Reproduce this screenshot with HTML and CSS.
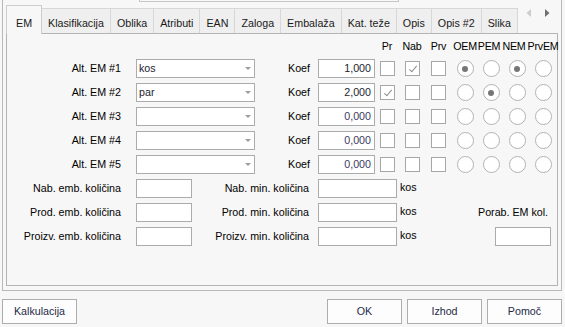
FILE: index.html
```html
<!DOCTYPE html>
<html lang="sl">
<head>
    <meta charset="UTF-8">
    <meta name="viewport" content="width=device-width, initial-scale=1.0">
    <title>Artikel - EM</title>
    <link rel="stylesheet" href="styles.css">
</head>
<body>
    <!-- Tab control frame -->
    <div class="frame">
        <div class="topbox"></div>

        <div class="tabs">
            <div class="tab active">EM</div>
            <div class="tab">Klasifikacija</div>
            <div class="tab">Oblika</div>
            <div class="tab">Atributi</div>
            <div class="tab">EAN</div>
            <div class="tab">Zaloga</div>
            <div class="tab">Embalaža</div>
            <div class="tab">Kat. teže</div>
            <div class="tab">Opis</div>
            <div class="tab">Opis #2</div>
            <div class="tab">Slika</div>
            <div class="tab-arrows">
                <svg width="5" height="8" viewBox="0 0 5 8"><path d="M5 0 L0.5 4 L5 8 Z" fill="#cdcdcd"/></svg>
                <svg width="5" height="8" viewBox="0 0 5 8"><path d="M0 0 L4.5 4 L0 8 Z" fill="#707070"/></svg>
            </div>
        </div>

        <div class="panel">
            <!-- Alternative units -->
            <div class="em-grid">
                <span class="head-gap"></span>
                <span class="col-head">Pr</span>
                <span class="col-head">Nab</span>
                <span class="col-head">Prv</span>
                <span class="col-head">OEM</span>
                <span class="col-head pem">PEM</span>
                <span class="col-head nem">NEM</span>
                <span class="col-head">PrvEM</span>

                <label class="lbl">Alt. EM #1</label>
                <div class="combo"><span>kos</span><i class="combo-arrow"></i></div>
                <label class="lbl koef">Koef</label>
                <div class="num">1,000</div>
                <span class="cell"><span class="chk"></span></span>
                <span class="cell"><span class="chk checked"></span></span>
                <span class="cell"><span class="chk"></span></span>
                <span class="cell"><span class="radio on"></span></span>
                <span class="cell"><span class="radio"></span></span>
                <span class="cell"><span class="radio on"></span></span>
                <span class="cell"><span class="radio"></span></span>

                <label class="lbl">Alt. EM #2</label>
                <div class="combo"><span>par</span><i class="combo-arrow"></i></div>
                <label class="lbl koef">Koef</label>
                <div class="num">2,000</div>
                <span class="cell"><span class="chk checked"></span></span>
                <span class="cell"><span class="chk"></span></span>
                <span class="cell"><span class="chk"></span></span>
                <span class="cell"><span class="radio"></span></span>
                <span class="cell"><span class="radio on"></span></span>
                <span class="cell"><span class="radio"></span></span>
                <span class="cell"><span class="radio"></span></span>

                <label class="lbl">Alt. EM #3</label>
                <div class="combo"><span></span><i class="combo-arrow"></i></div>
                <label class="lbl koef">Koef</label>
                <div class="num dim">0,000</div>
                <span class="cell"><span class="chk"></span></span>
                <span class="cell"><span class="chk"></span></span>
                <span class="cell"><span class="chk"></span></span>
                <span class="cell"><span class="radio"></span></span>
                <span class="cell"><span class="radio"></span></span>
                <span class="cell"><span class="radio"></span></span>
                <span class="cell"><span class="radio"></span></span>

                <label class="lbl">Alt. EM #4</label>
                <div class="combo"><span></span><i class="combo-arrow"></i></div>
                <label class="lbl koef">Koef</label>
                <div class="num dim">0,000</div>
                <span class="cell"><span class="chk"></span></span>
                <span class="cell"><span class="chk"></span></span>
                <span class="cell"><span class="chk"></span></span>
                <span class="cell"><span class="radio"></span></span>
                <span class="cell"><span class="radio"></span></span>
                <span class="cell"><span class="radio"></span></span>
                <span class="cell"><span class="radio"></span></span>

                <label class="lbl">Alt. EM #5</label>
                <div class="combo"><span></span><i class="combo-arrow"></i></div>
                <label class="lbl koef">Koef</label>
                <div class="num dim">0,000</div>
                <span class="cell"><span class="chk"></span></span>
                <span class="cell"><span class="chk"></span></span>
                <span class="cell"><span class="chk"></span></span>
                <span class="cell"><span class="radio"></span></span>
                <span class="cell"><span class="radio"></span></span>
                <span class="cell"><span class="radio"></span></span>
                <span class="cell"><span class="radio"></span></span>
            </div>

            <!-- Package quantities -->
            <div class="qty-grid">
                <label class="lbl">Nab. emb. količina</label>
                <div class="box"></div>
                <label class="lbl mid">Nab. min. količina</label>
                <div class="box"></div>
                <span class="unit">kos</span>
                <span></span>

                <label class="lbl">Prod. emb. količina</label>
                <div class="box"></div>
                <label class="lbl mid">Prod. min. količina</label>
                <div class="box"></div>
                <span class="unit">kos</span>
                <label class="lbl porab">Porab. EM kol.</label>

                <label class="lbl">Proizv. emb. količina</label>
                <div class="box"></div>
                <label class="lbl mid">Proizv. min. količina</label>
                <div class="box"></div>
                <span class="unit">kos</span>
                <div class="box porab-box"></div>
            </div>
        </div>
    </div>

    <!-- Dialog buttons -->
    <div class="buttons">
        <button class="btn">Kalkulacija</button>
        <div class="btn-group">
            <button class="btn">OK</button>
            <button class="btn">Izhod</button>
            <button class="btn">Pomoč</button>
        </div>
    </div>
</body>
</html>
```

FILE: styles.css
```css
/* Global Styles */
body {
    margin: 0;
    width: 565px;
    height: 327px;
    overflow: hidden;
    background: #f7f7f7;
    font-family: "Liberation Sans", Arial, sans-serif;
    font-size: 10.7px;
    line-height: 13px;
    color: #000;
}

/* Outer frame */
.frame {
    box-sizing: border-box;
    width: 560px;
    margin-left: 2px;
    padding: 0 3px 4px;
    border: 1px solid #b9b9b9;
    border-top: none;
}
.topbox {
    width: 258px;
    height: 1px;
    margin-left: 133px;
    border: 1px solid #c6c6c6;
    border-top: none;
}

/* Tabs */
.tabs {
    display: flex;
    align-items: flex-end;
    height: 28px;
    margin-top: 3px;
}
.tab {
    box-sizing: border-box;
    height: 25px;
    display: flex;
    align-items: flex-end;
    padding: 0 6px 3px;
    background: #efefef;
    border-top: 1px solid #d7d7d7;
    border-right: 1px solid #d7d7d7;
    color: #1a1a1a;
    white-space: nowrap;
}
.tab.active {
    position: relative;
    z-index: 1;
    height: 29px;
    margin-bottom: -1px;
    padding: 0 9px 4px;
    background: #f7f7f7;
    border-left: 1px solid #cdcdcd;
    border-top-color: #cdcdcd;
    border-right-color: #cdcdcd;
}
.tab-arrows {
    align-self: flex-start;
    display: flex;
    gap: 14px;
    margin: 4px 8px 0 auto;
}

/* Tab page */
.panel {
    box-sizing: border-box;
    height: 253px;
    border: 1px solid #b4b4b4;
    background: #f7f7f7;
}

.em-grid {
    display: grid;
    grid-template-columns: 129px 119px 63px 57px 24px 26px 27px 26px 26px 26px 26px;
    grid-auto-rows: 19px;
    row-gap: 5px;
    padding-top: 1px;
    align-items: center;
}
.head-gap {
    grid-column: span 4;
}
.col-head {
    align-self: end;
    display: flex;
    justify-content: center;
    white-space: nowrap;
    padding-bottom: 1px;
    letter-spacing: -0.2px;
}
.col-head.pem {
    padding-right: 4px;
}
.col-head.nem {
    padding-right: 6px;
}

.lbl {
    text-align: right;
    padding-right: 15px;
    white-space: nowrap;
}
.lbl.koef {
    padding-right: 8px;
}

.combo {
    box-sizing: border-box;
    height: 19px;
    display: flex;
    align-items: center;
    padding: 0 3px 0 2px;
    background: #fff;
    border: 1px solid #ababab;
    color: #1c1c2c;
}
.combo-arrow {
    margin-left: auto;
    border-left: 3px solid transparent;
    border-right: 3px solid transparent;
    border-top: 3px solid #9c9c9c;
}

.num,
.box {
    box-sizing: border-box;
    height: 19px;
    background: #fff;
    border: 1px solid #ababab;
}
.num {
    text-align: right;
    padding-right: 3px;
    line-height: 17px;
    color: #1c1c2c;
}
.num.dim {
    color: #3a3a60;
}

.cell {
    display: flex;
    justify-content: center;
    align-items: center;
}
.chk {
    position: relative;
    box-sizing: border-box;
    width: 15px;
    height: 15px;
    background: #fff;
    border: 1px solid #a7a7a7;
}
.chk.checked::after {
    content: "";
    position: absolute;
    left: 5px;
    top: 2px;
    width: 3px;
    height: 7px;
    border-right: 1px solid #8c8c8c;
    border-bottom: 1px solid #8c8c8c;
    transform: rotate(40deg);
}
.radio {
    box-sizing: border-box;
    width: 17px;
    height: 17px;
    display: flex;
    align-items: center;
    justify-content: center;
    background: #fff;
    border: 1px solid #b3b3b3;
    border-radius: 50%;
}
.radio.on::after {
    content: "";
    width: 6px;
    height: 6px;
    border-radius: 50%;
    background: #767676;
}

/* Quantities */
.qty-grid {
    display: grid;
    grid-template-columns: 129px 56px 126px 79px 81px 73px;
    grid-auto-rows: 19px;
    row-gap: 5px;
    margin-top: 5px;
    align-items: center;
}
.lbl.mid {
    padding-right: 9px;
}
.unit {
    padding-left: 3px;
    align-self: start;
    padding-top: 2px;
}
.lbl.porab {
    padding-right: 5px;
}
.porab-box {
    width: 56px;
    justify-self: end;
}

/* Buttons */
.buttons {
    display: flex;
    margin: 8px 3px 0 2px;
}
.btn-group {
    display: flex;
    gap: 5px;
    margin-left: auto;
}
.btn {
    box-sizing: border-box;
    width: 75px;
    height: 25px;
    padding: 0;
    font: inherit;
    color: #1e2b47;
    background: #fdfdfd;
    border: 1px solid #adadad;
    border-radius: 0;
}
```
